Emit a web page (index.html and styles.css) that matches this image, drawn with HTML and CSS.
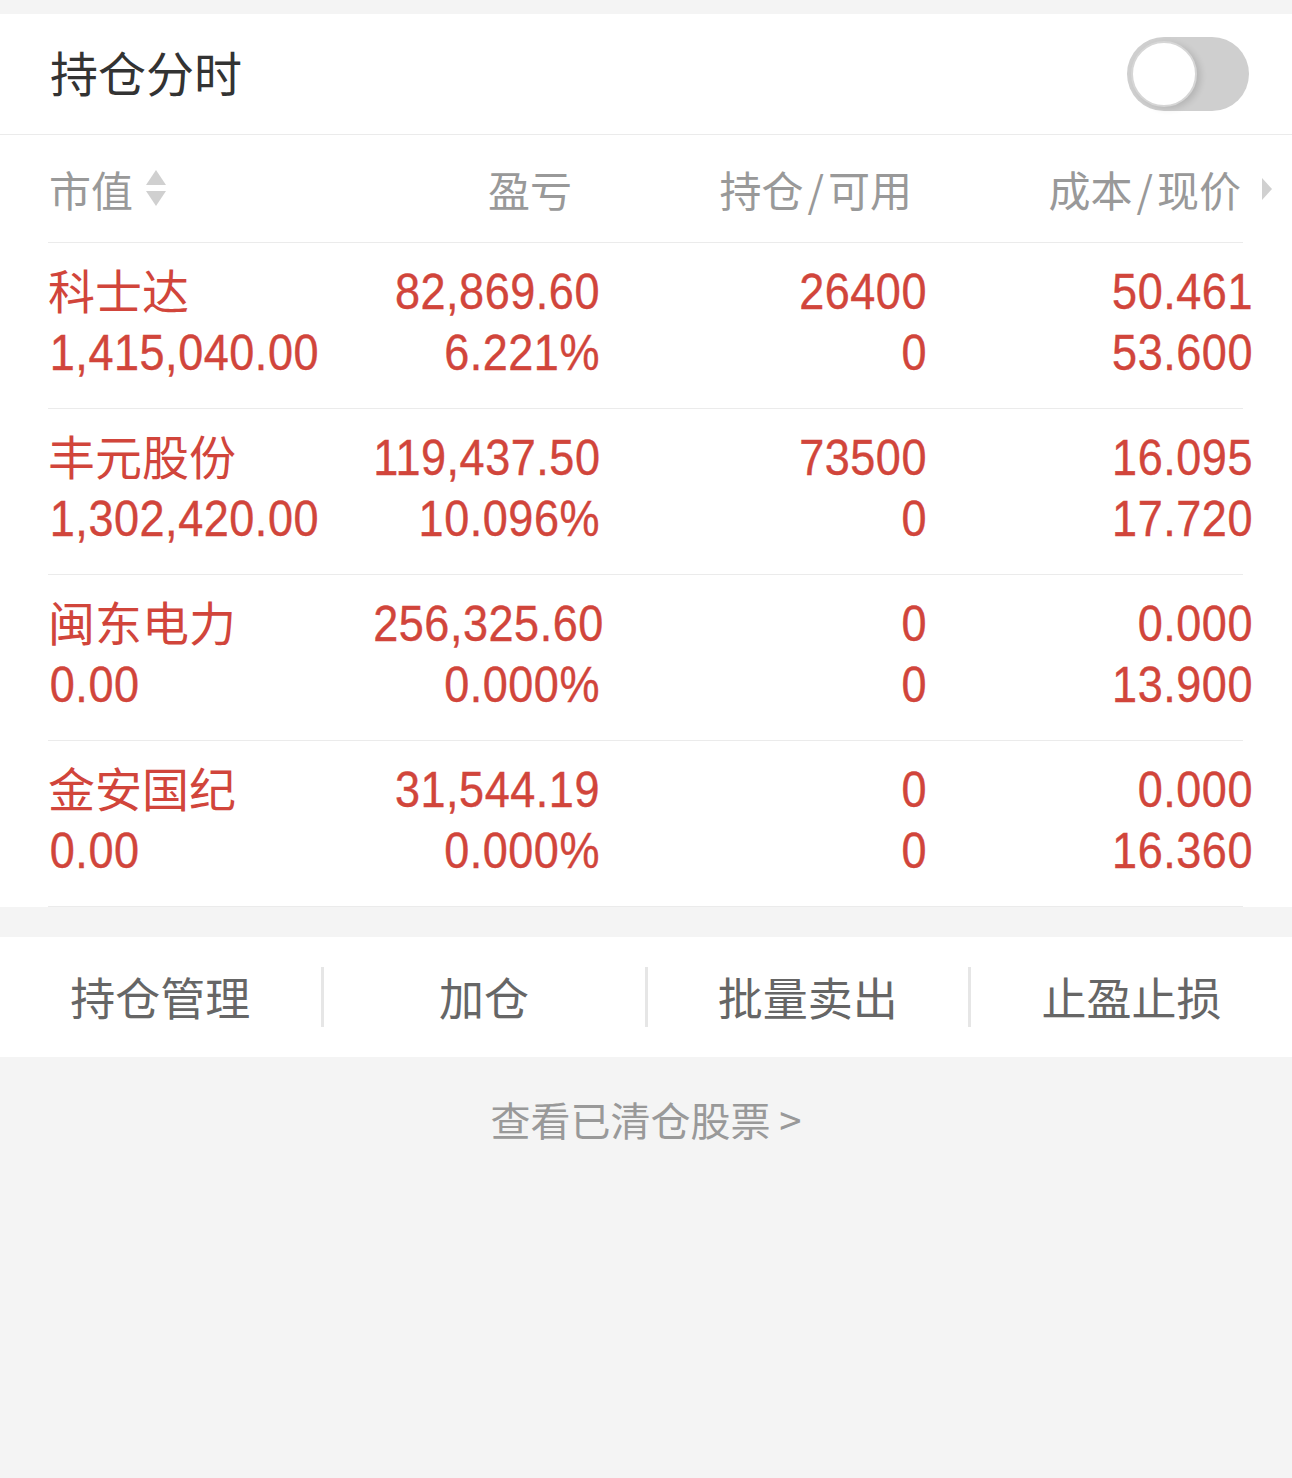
FILE: index.html
```html
<!DOCTYPE html>
<html>
<head>
	<meta charset="utf-8">
	<title>持仓</title>
	<link rel="stylesheet" href="styles.css">
</head>
<body>
<div class="topGap"></div>

<div class="panel">
	<div class="switchRow">
		<span class="switchTitle">持仓分时</span>
		<span class="toggle"><span class="knob"></span></span>
	</div>

	<div class="table">
		<div class="row headRow">
			<div class="cell headCell first">市值
				<svg class="sortIcon" width="22" height="40" viewBox="0 0 22 40"><polygon points="11,1 21,16 1,16" fill="#d0d0d0"/><polygon points="1,22 21,22 11,37" fill="#d0d0d0"/></svg>
			</div>
			<div class="cell headCell c2">盈亏</div>
			<div class="cell headCell c3">持仓<span class="slash">/</span>可用</div>
			<div class="cell headCell c4">成本<span class="slash">/</span>现价
				<svg class="moreIcon" width="12" height="24" viewBox="0 0 12 24"><polygon points="1,1 11,12 1,23" fill="#d0d0d0"/></svg>
			</div>
		</div>

		<div class="row dataRow">
			<div class="cell first"><div class="name">科士达</div><div class="num">1,415,040.00</div></div>
			<div class="cell"><div class="num">82,869.60</div><div class="num">6.221%</div></div>
			<div class="cell"><div class="num">26400</div><div class="num">0</div></div>
			<div class="cell last"><div class="num">50.461</div><div class="num">53.600</div></div>
		</div>

		<div class="row dataRow">
			<div class="cell first"><div class="name">丰元股份</div><div class="num">1,302,420.00</div></div>
			<div class="cell"><div class="num">119,437.50</div><div class="num">10.096%</div></div>
			<div class="cell"><div class="num">73500</div><div class="num">0</div></div>
			<div class="cell last"><div class="num">16.095</div><div class="num">17.720</div></div>
		</div>

		<div class="row dataRow">
			<div class="cell first"><div class="name">闽东电力</div><div class="num">0.00</div></div>
			<div class="cell"><div class="num">256,325.60</div><div class="num">0.000%</div></div>
			<div class="cell"><div class="num">0</div><div class="num">0</div></div>
			<div class="cell last"><div class="num">0.000</div><div class="num">13.900</div></div>
		</div>

		<div class="row dataRow">
			<div class="cell first"><div class="name">金安国纪</div><div class="num">0.00</div></div>
			<div class="cell"><div class="num">31,544.19</div><div class="num">0.000%</div></div>
			<div class="cell"><div class="num">0</div><div class="num">0</div></div>
			<div class="cell last"><div class="num">0.000</div><div class="num">16.360</div></div>
		</div>
	</div>
</div>

<div class="actionBar">
	<div class="action">持仓管理</div>
	<div class="action">加仓</div>
	<div class="action">批量卖出</div>
	<div class="action">止盈止损</div>
</div>

<div class="clearedLink">查看已清仓股票 &gt;</div>
</body>
</html>
```

FILE: styles.css
```css
html, body {
	margin: 0;
	padding: 0;
}

body {
	background-color: #f4f4f4;
	font-family: "Noto Sans CJK SC", "Noto Sans", sans-serif;
	width: 1292px;
	height: 1478px;
	overflow: hidden;
}

.topGap {
	height: 14px;
}

.panel {
	background-color: #fff;
}

.switchRow {
	height: 120px;
	display: flex;
	align-items: center;
	justify-content: space-between;
	padding: 0 43px 0 50px;
	border-bottom: 1px solid #ebebeb;
}

.switchTitle {
	font-size: 48px;
	color: #333;
	line-height: 1;
	margin-top: -6px;
}

.toggle {
	width: 122px;
	height: 74px;
	border-radius: 37px;
	background-color: #cfcfcf;
	display: flex;
	align-items: center;
	padding-left: 4px;
	box-sizing: border-box;
}

.knob {
	width: 66px;
	height: 66px;
	border-radius: 50%;
	background-color: #fff;
	box-sizing: border-box;
	border: 2px solid #d6d6d6;
	box-shadow: 4px 2px 6px rgba(0, 0, 0, 0.12);
}

.table {
	padding: 0 49px 0 48px;
}

.row {
	display: grid;
	grid-template-columns: 300px 252px 327px 316px;
	border-bottom: 1px solid #ebebeb;
}

.headRow {
	height: 107px;
	align-items: center;
}

.headCell {
	font-size: 42px;
	color: #999;
	text-align: right;
	line-height: 1;
	display: flex;
	align-items: center;
	justify-content: flex-end;
}

.headCell.first {
	justify-content: flex-start;
	padding-left: 1px;
}

.headCell.c2 {
	padding-right: 28px;
}

.headCell.c3 {
	padding-right: 15px;
}

.headCell.c4 {
	margin-right: -30px;
}

.slash {
	margin: 0 4px;
}

.sortIcon {
	margin-left: 12px;
}

.moreIcon {
	margin-left: 20px;
}

.dataRow {
	padding-top: 19px;
	height: 146px;
}

.cell {
	text-align: right;
}

.cell.first {
	text-align: left;
}

.cell.last {
	margin-right: -10px;
}

.name, .num {
	color: #d1453b;
	height: 61px;
}

.name {
	font-size: 47px;
	line-height: 54px;
}

.num {
	font-family: "Liberation Sans", Arial, sans-serif;
	font-size: 50px;
	line-height: 61px;
	letter-spacing: 0.6px;
	-webkit-text-stroke: 0.4px #d1453b;
	transform: scaleX(0.9);
	transform-origin: right center;
}

.first .num {
	transform-origin: left center;
	padding-left: 2px;
}

.actionBar {
	margin-top: 30px;
	height: 120px;
	background-color: #fff;
	display: flex;
	align-items: center;
}

.action {
	flex: 1;
	text-align: center;
	font-size: 45px;
	color: #666;
	line-height: 60px;
	border-left: 3px solid #e6e6e6;
}

.action:first-child {
	border-left: none;
}

.clearedLink {
	text-align: center;
	font-size: 40px;
	color: #999;
	padding-top: 33px;
}
```
